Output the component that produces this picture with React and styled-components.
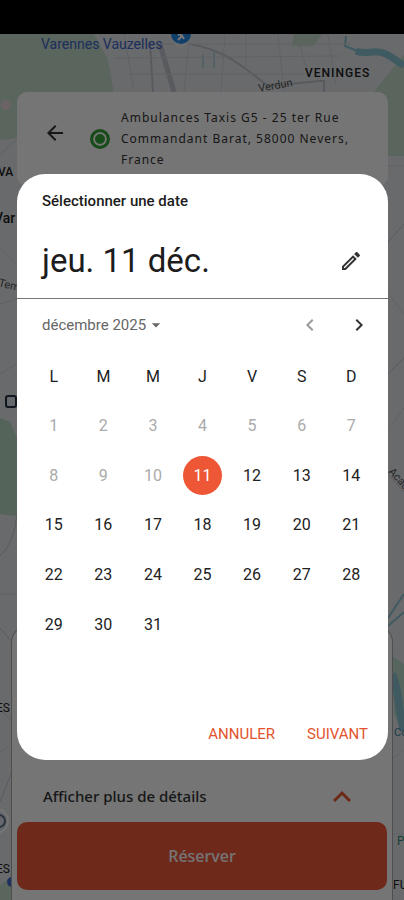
import React, { useState } from 'react';
import styled, { createGlobalStyle } from 'styled-components';
import { MdArrowBack, MdArrowDropDown, MdChevronLeft, MdChevronRight, MdOutlineEdit } from 'react-icons/md';

const GlobalStyle = createGlobalStyle`
  *, *::before, *::after {
    box-sizing: border-box;
  }

  body {
    margin: 0;
    background: #000;
  }

  button {
    border: none;
    padding: 0;
    background: none;
    font: inherit;
    color: inherit;
    cursor: pointer;
  }
`;

const Screen = styled.div`
  min-height: 100vh;
  display: flex;
  flex-direction: column;
  font-family: Roboto, sans-serif;
`;

const StatusBar = styled.div`
  height: 34px;
  background: #000;
`;

const Body = styled.main`
  position: relative;
  flex: 1;
  display: flex;
  flex-direction: column;
  justify-content: space-between;
  overflow: hidden;
  background: #e4e6ea;
`;

const MapSvg = styled.svg`
  position: absolute;
  inset: 0;
  width: 100%;
  height: 100%;
`;

const AddressCard = styled.section`
  position: relative;
  display: flex;
  align-items: center;
  margin: 58px 16px 0 17px;
  padding: 15px 16px 16px 26px;
  border-radius: 10px;
  background: #fff;
`;

const BackButton = styled.button`
  display: flex;
  margin: 0 23px 12px 0;
  color: #333;
`;

const OriginDot = styled.span`
  width: 20px;
  height: 20px;
  margin-right: 11px;
  border: 3px solid #34a53a;
  border-radius: 50%;
  background: #34a53a;
  box-shadow: inset 0 0 0 2px #fff;
  flex-shrink: 0;
`;

const Address = styled.p`
  margin: 0;
  flex: 1;
  font-family: 'Noto Sans', sans-serif;
  font-size: 12px;
  line-height: 21px;
  letter-spacing: 1px;
  color: #333;
`;

const BottomSheet = styled.section`
  position: relative;
  min-height: 274px;
  display: flex;
  flex-direction: column;
  justify-content: flex-end;
  margin: 0 11px;
  padding: 0 5px 10px;
  border: 1px solid #aaa;
  border-bottom: none;
  border-radius: 16px 16px 0 0;
  background: #fff;
  font-family: 'Noto Sans', sans-serif;
  font-weight: 500;
`;

const DetailsToggle = styled.button`
  display: flex;
  align-items: center;
  justify-content: space-between;
  height: 52px;
  padding: 0 36px 0 26px;
  font-size: 15px;
  color: #333;
`;

const ReserveButton = styled.button`
  height: 68px;
  border-radius: 10px;
  background: #f05a3c;
  color: #fff;
  font-size: 16px;
`;

const Scrim = styled.div`
  position: absolute;
  inset: 0;
  display: flex;
  align-items: center;
  padding: 0 16px 0 17px;
  background: rgba(0, 0, 0, 0.54);
`;

const Dialog = styled.div`
  flex: 1;
  overflow: hidden;
  border-radius: 28px;
  background: #fff;
  color: #1c1c1c;
`;

const DialogHeader = styled.header`
  padding: 17px 25px 16px;
  border-bottom: 1px solid #777;
`;

const DialogLabel = styled.div`
  font-size: 15px;
  font-weight: 500;
  line-height: 20px;
`;

const DateRow = styled.div`
  display: flex;
  align-items: center;
  justify-content: space-between;
  margin-top: 29px;
`;

const DateTitle = styled.h1`
  margin: 0;
  font-size: 33px;
  font-weight: 400;
  line-height: 42px;
`;

const IconButton = styled.button`
  display: flex;
  align-items: center;
  justify-content: center;
  color: #333;

  &:disabled {
    color: #999;
    cursor: default;
  }
`;

const MonthRow = styled.div`
  display: flex;
  align-items: center;
  justify-content: space-between;
  height: 52px;
  padding: 0 17px 0 25px;
`;

const MonthButton = styled.button`
  display: flex;
  align-items: center;
  font-size: 15px;
  color: #666;
`;

const MonthNav = styled.div`
  display: flex;
  gap: 25px;
`;

const Calendar = styled.div`
  display: grid;
  grid-template-columns: repeat(7, 1fr);
  padding: 0 12px;
  font-size: 16px;
`;

const Cell = styled.div`
  aspect-ratio: 1;
  display: flex;
  align-items: center;
  justify-content: center;
`;

const DayButton = styled.button`
  width: 39px;
  height: 39px;
  border-radius: 50%;
  background: ${props => props.$selected ? '#ee5735' : 'transparent'};
  color: ${props => props.$selected ? '#fff' : '#222'};

  &:disabled {
    color: #aaa;
    cursor: default;
  }
`;

const Actions = styled.footer`
  display: flex;
  justify-content: flex-end;
  gap: 32px;
  padding: 25px 20px 16px;
`;

const ActionButton = styled.button`
  font-size: 15px;
  line-height: 20px;
  color: #e2532d;
`;

const WEEKDAYS = ['L', 'M', 'M', 'J', 'V', 'S', 'D'];
const WEEKDAY_NAMES = ['lun.', 'mar.', 'mer.', 'jeu.', 'ven.', 'sam.', 'dim.'];
const TODAY = 11;
const DAYS_IN_MONTH = 31;
const CELLS = Array.from({ length: 42 }, (_, i) => i + 1);

const MapBackground = () => (
  <MapSvg viewBox="0 0 404 866" preserveAspectRatio="xMidYMin slice" aria-hidden="true">
    <g fill="#c4dccb">
      <path d="M0 0H94L108 26 114 60 17 78V104L0 106Z" />
      <path d="M374 58 404 20V122H388L374 92Z" />
      <path d="M294 0H322L314 12H292Z" />
      <path d="M0 384 10 388 17 404V482L0 480Z" fill="#b9d9c5" />
      <path d="M0 851 11 843V866H0Z" />
      <path d="M392 622 404 630V700L394 680Z" fill="#bcdccd" />
    </g>
    <circle cx="6" cy="71" r="5" fill="#ead7dc" />
    <g fill="none" stroke="#8cc5d6">
      <path d="M346 2 345 12 360 18" strokeWidth="2" />
      <path d="M356 17C368 22 374 14 386 20S397 29 404 31" strokeWidth="7" />
      <path d="M388 584 404 560M388 592 404 578" strokeWidth="2" />
      <path d="M203 20V34M214 18V34" />
      <path d="M392 640C400 656 398 680 404 696" strokeWidth="8" />
    </g>
    <g fill="none" stroke="#bfc5ce">
      <path d="M160 10 174 58" strokeWidth="5" />
      <path d="M190 10C226 16 244 34 268 52M150 8 153 58M268 52 320 47H324V58" strokeWidth="2" />
      <path d="M0 522Q14 510 17 480M0 594 12 608 17 620M0 676 11 686M0 768 11 740M388 208 404 190M388 340 404 324M388 440 404 458" />
    </g>
    <g fill="none" stroke="#d1d5db">
      <path d="M118 10H350M116 24 340 22M128 40H304M190 0 184 58M225 0 221 58M246 0V36M278 0 284 58M300 10 308 42M328 0 336 52M124 0 134 56" />
      <path d="M0 120 16 106M0 215 16 230M0 270 17 265M0 340 16 330M0 560H16M0 718 10 712M388 132H404M389 260 404 280M391 392 404 374M393 724 404 716M393 800H404" />
    </g>
    <path d="M170 0H192Q192 7 181 16Q170 8 170 0Z" fill="#eee" />
    <path d="M171 0H191A10 10 0 0 1 171 0Z" fill="#2489e8" />
    <path d="M178 1 181 0 184 5M181 0V3L178 6" fill="none" stroke="#fff" strokeWidth="2" />
    <circle cx="-4" cy="787" r="12" fill="#dde3ee" stroke="#fff" strokeWidth="2" />
    <circle cx="-1" cy="787" r="6" fill="none" stroke="#5e7186" strokeWidth="2" />
    <rect x="6" y="362" width="10" height="11" rx="2" fill="#dce4ea" stroke="#263443" strokeWidth="2" />
    <circle cx="12" cy="848" r="5" fill="#416bd1" />
    <g fontFamily="Roboto, sans-serif" fill="#222" fontSize="12">
      <text x="41" y="15" fontSize="14" fill="#3f67c8">Varennes Vauzelles</text>
      <text x="305" y="43" fontWeight="500" letterSpacing="1">VENINGES</text>
      <text x="259" y="58" fontSize="11" fill="#555" transform="rotate(-10 259 58)">Verdun</text>
      <text x="-2" y="142" fontWeight="500">VA</text>
      <text x="-6" y="189" fontSize="14" fontWeight="500">Var</text>
      <text x="-2" y="252" fontSize="11" fill="#555" transform="rotate(14 -2 252)">Temp</text>
      <text x="388" y="438" fontSize="11" fill="#555" transform="rotate(48 388 438)">Acacias</text>
      <text x="-4" y="678">ES</text>
      <text x="-4" y="839">ES</text>
      <text x="394" y="702" fontSize="11" fill="#3b87a5">Co</text>
      <text x="397" y="811" fill="#328a6d">P</text>
      <text x="393" y="855">FU</text>
    </g>
  </MapSvg>
);

const App = () => {
  const [selectedDay, setSelectedDay] = useState(TODAY);

  return (
    <Screen>
      <GlobalStyle />
      <StatusBar />
      <Body>
        <MapBackground />

        <AddressCard>
          <BackButton aria-label="Retour">
            <MdArrowBack size={24} />
          </BackButton>
          <OriginDot />
          <Address>Ambulances Taxis G5 - 25 ter Rue Commandant Barat, 58000 Nevers, France</Address>
        </AddressCard>

        <BottomSheet>
          <DetailsToggle>
            Afficher plus de détails
            <svg width="18" height="12" viewBox="0 0 18 12" fill="none" stroke="#ee5735" strokeWidth="3">
              <path d="M1 11 9 3 17 11" />
            </svg>
          </DetailsToggle>
          <ReserveButton>Réserver</ReserveButton>
        </BottomSheet>

        <Scrim>
          <Dialog role="dialog" aria-labelledby="date-label">
            <DialogHeader>
              <DialogLabel id="date-label">Sélectionner une date</DialogLabel>
              <DateRow>
                <DateTitle>{WEEKDAY_NAMES[(selectedDay - 1) % 7]} {selectedDay} déc.</DateTitle>
                <IconButton aria-label="Saisir la date">
                  <MdOutlineEdit size={24} />
                </IconButton>
              </DateRow>
            </DialogHeader>

            <MonthRow>
              <MonthButton>
                décembre 2025
                <MdArrowDropDown size={20} />
              </MonthButton>
              <MonthNav>
                <IconButton aria-label="Mois précédent" disabled>
                  <MdChevronLeft size={24} />
                </IconButton>
                <IconButton aria-label="Mois suivant">
                  <MdChevronRight size={24} />
                </IconButton>
              </MonthNav>
            </MonthRow>

            <Calendar>
              {WEEKDAYS.map((day, i) => (
                <Cell key={WEEKDAY_NAMES[i]}>{day}</Cell>
              ))}
              {CELLS.map(day => (
                <Cell key={day}>
                  {day <= DAYS_IN_MONTH && (
                    <DayButton
                      $selected={day === selectedDay}
                      disabled={day < TODAY}
                      onClick={() => setSelectedDay(day)}
                    >
                      {day}
                    </DayButton>
                  )}
                </Cell>
              ))}
            </Calendar>

            <Actions>
              <ActionButton>ANNULER</ActionButton>
              <ActionButton>SUIVANT</ActionButton>
            </Actions>
          </Dialog>
        </Scrim>
      </Body>
    </Screen>
  );
};

export default App;
